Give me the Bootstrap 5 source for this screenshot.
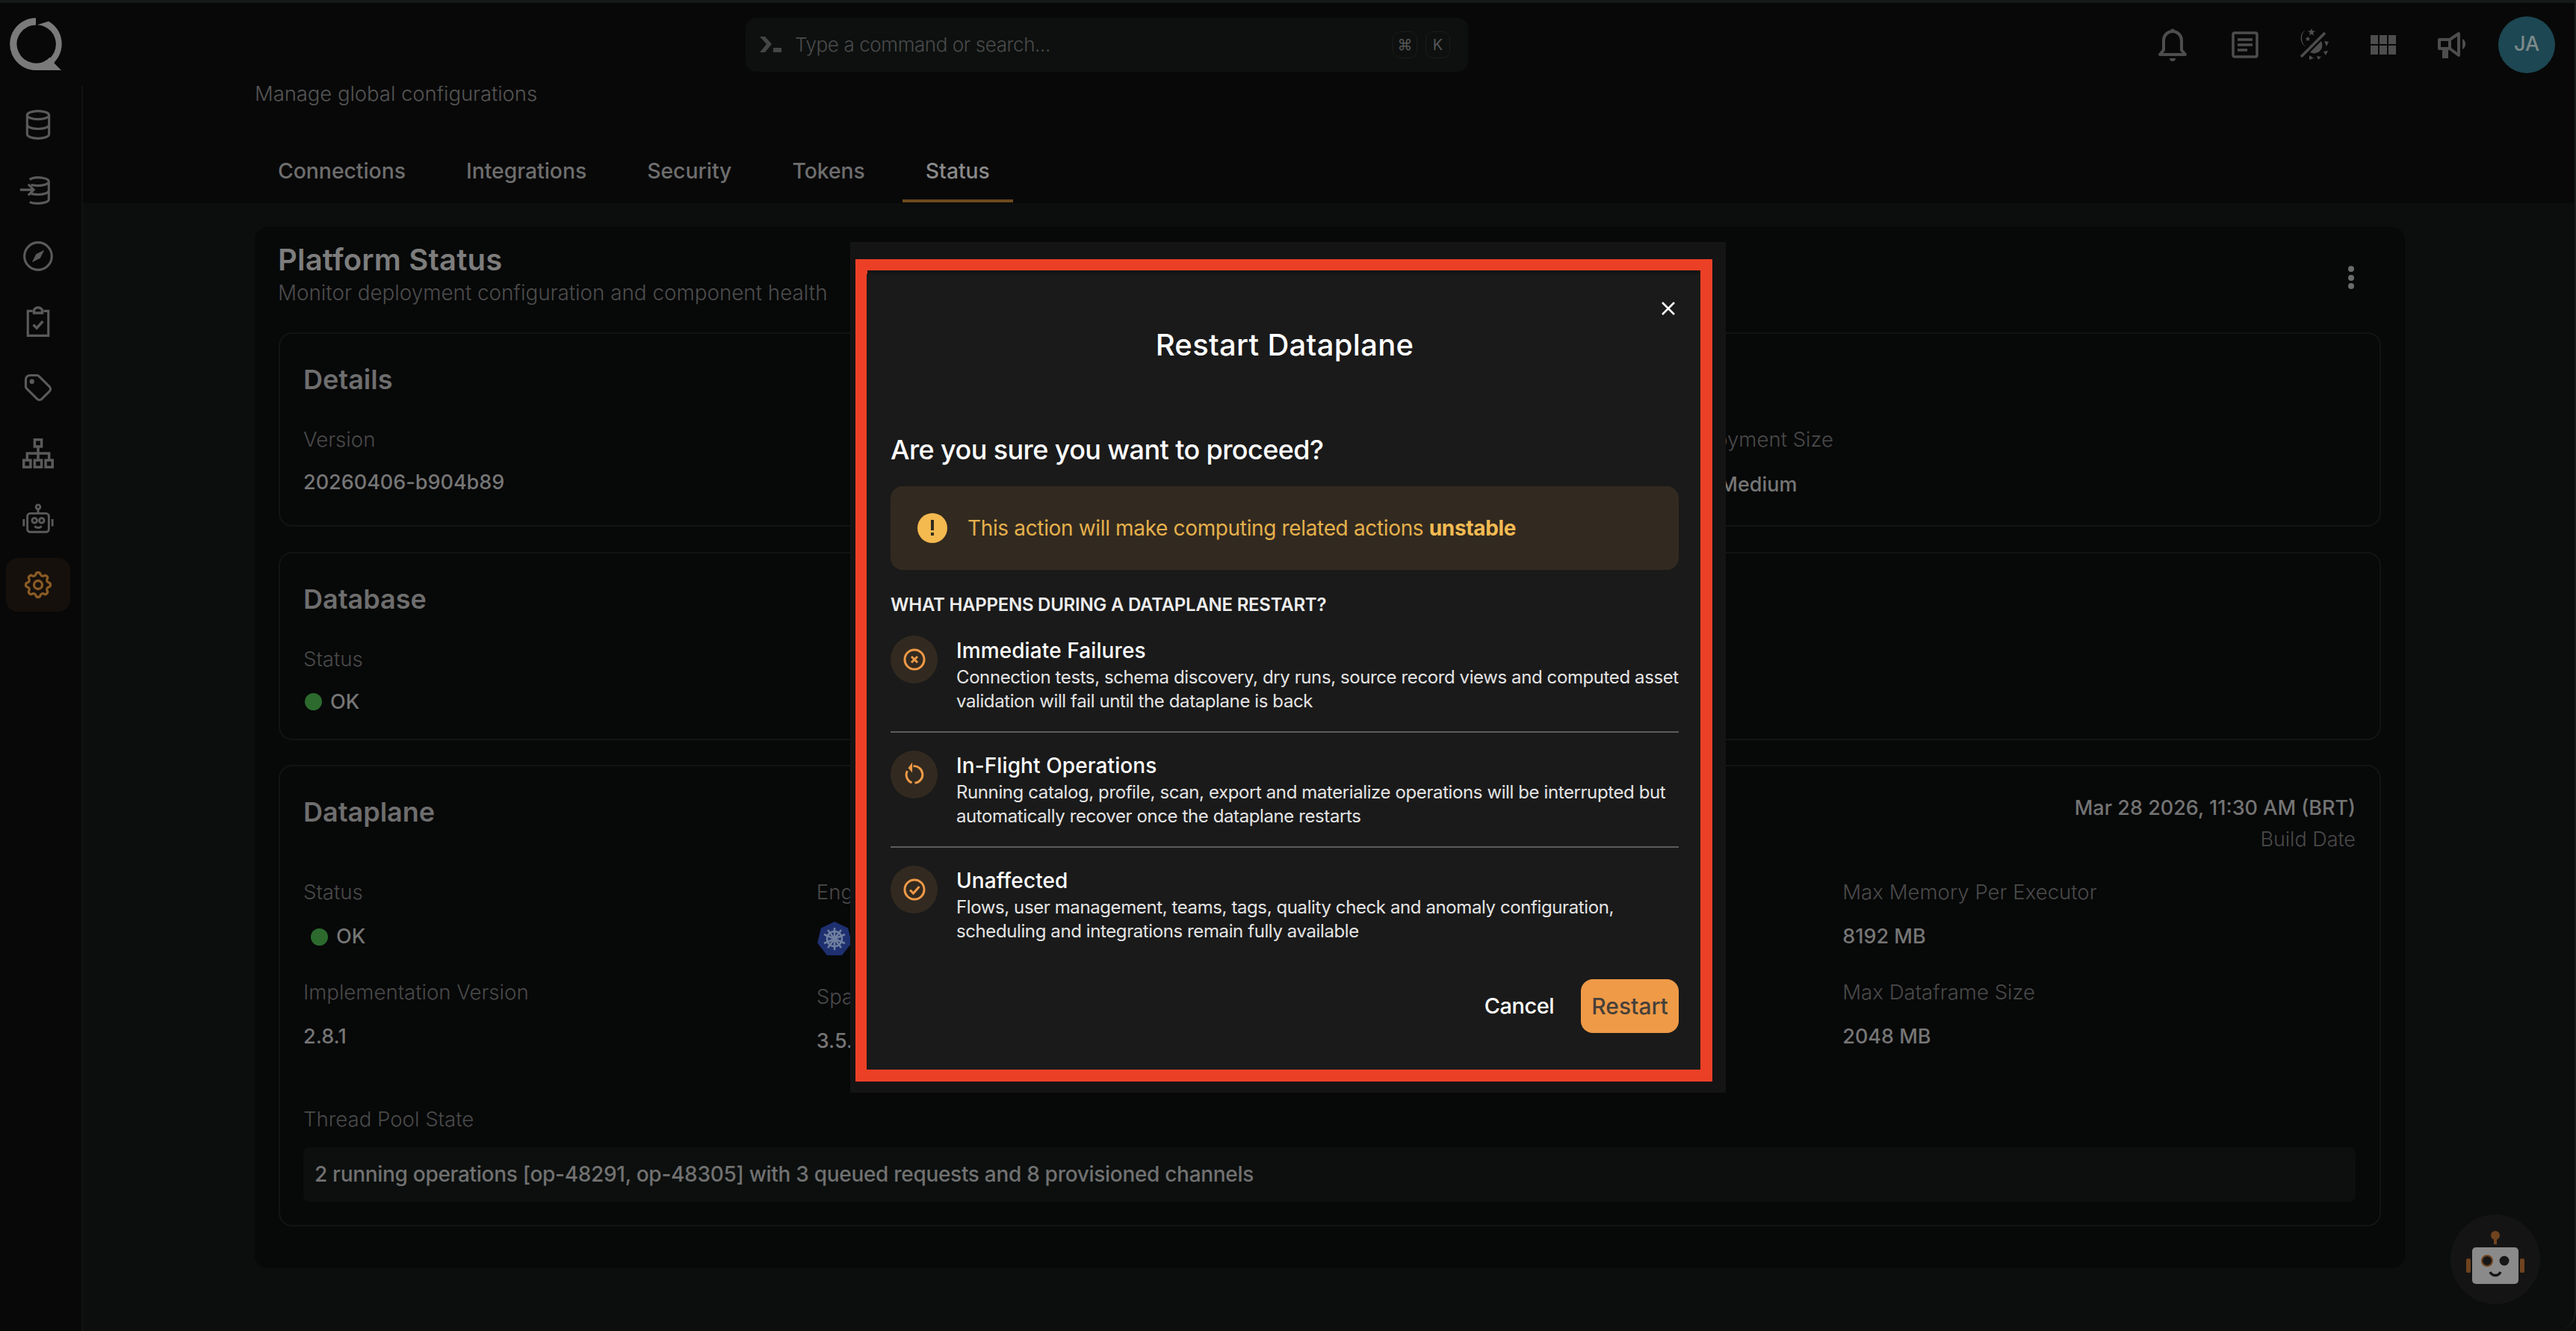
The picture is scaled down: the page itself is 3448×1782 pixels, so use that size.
<!DOCTYPE html>
<html lang="en">
<head>
  <meta charset="UTF-8">
  <meta name="viewport" content="width=device-width, initial-scale=1.0">
  <title>Platform Status</title>
  <link href="https://cdn.jsdelivr.net/npm/bootstrap@5.3.1/dist/css/bootstrap.min.css" rel="stylesheet">
  <style>
    html, body { height: 100%; }
    body { background: #0b0e0d; font-family: "Inter", "Liberation Sans", sans-serif; font-size: 28px; color: #767676; overflow: hidden; position: relative; }
    svg { display: block; }
    .app-frame { height: 100%; border-right: 2px solid #1a1d1d; border-bottom-right-radius: 26px; overflow: hidden; }

    /* top bar */
    .top-strip { height: 4px; background: #151918; flex: none; }
    .top-bar { height: 111px; background: #080808; flex: none; padding-left: 13px; padding-right: 26px; }
    .logo-q { width: 72px; height: 72px; }
    .cmd-box { margin-left: 913px; width: 967px; height: 72px; background: #0d100f; border-radius: 14px; padding: 0 24px 0 19px; }
    .cmd-text { color: #4a4a4a; font-weight: 300; margin-left: 17px; font-size: 26px; letter-spacing: -.4px; }
    .key-caps { gap: 11px; }
    .key-cap { width: 33px; height: 36px; border: 1px solid #1a1c1c; border-radius: 10px; color: #565656; font-size: 20px; display: flex; align-items: center; justify-content: center; }
    .top-icons { margin-left: auto; color: #4d4d4d; }
    .ico-bell { margin-right: 59px; }
    .ico-doc { margin-right: 45px; }
    .ico-theme { margin-right: 45px; }
    .ico-apps { margin-right: 56px; }
    .ico-horn { margin-right: 41px; }
    .avatar-ja { width: 76px; height: 76px; border-radius: 50%; background: #1c4753; color: #7d8a8a; font-size: 27px; font-weight: 500; display: flex; align-items: center; justify-content: center; }

    /* sidebar */
    .side-rail { width: 111px; flex: none; background: #080808; border-right: 2px solid #101212; padding-top: 16px; gap: 16px; }
    .rail-item { width: 86px; height: 72px; margin-left: 8px; border-radius: 16px; color: #5a5a5a; display: flex; align-items: center; justify-content: center; }
    .rail-item.is-active { background: #15100c; color: #8a5a24; }
    .ico-ingest { margin-left: -8px; }

    /* page head */
    .page-area { min-width: 0; overflow: hidden; }
    .page-head { height: 157px; background: #080808; padding-left: 230px; display: flow-root; }
    .page-sub { color: #555; font-weight: 300; font-size: 27.400px; line-height: 40px; margin-top: -10px; }
    .tab-row { margin-top: 50px; gap: 19px; }
    .tab-row .nav-link { color: #6e6e6e; font-size: 28.300px; font-weight: 500; padding: 0 31px; height: 76px; line-height: 68px; border-bottom: 4px solid transparent; }
    .tab-row .nav-link.active { color: #8a8a8a; border-bottom-color: #6e4a1c; }

    /* cards */
    .status-wrap { margin: 32px 0 0 230px; width: 2878px; background: #070808; border: 0; border-radius: 18px; padding: 20px 32px 56px; color: inherit; }
    .status-head { margin-left: -1px; }
    .status-title { font-size: 40px; line-height: 48px; font-weight: 600; letter-spacing: .2px; color: #7d7d7d; margin: 0; }
    .status-sub { font-size: 27.800px; line-height: 40px; font-weight: 300; color: #4d4d4d; margin-bottom: 33px; }
    .kebab { margin-top: 32px; margin-right: 36px; gap: 3.500px; }
    .kebab i { display: block; width: 8px; height: 8px; border-radius: 50%; background: #6b6b6b; }
    .info-card { background: transparent; border: 2px solid #121414; border-radius: 18px; padding: 31px 32px 29px 31px; color: inherit; margin-bottom: 33.500px; }
    .info-card.tall-foot { padding-bottom: 34px; }
    .info-card.dp-card { padding-bottom: 31px; }
    .info-title { font-size: 36px; line-height: 60px; font-weight: 600; color: #6e6e6e; margin: 0; }
    .field-label { font-size: 27.600px; line-height: 40px; font-weight: 300; color: #4a4a4a; }
    .field-value { font-size: 27px; line-height: 40px; font-weight: 500; color: #767676; margin-top: 18px; }
    .dp-card .field-value { margin-top: 20px; }
    .size-value { padding-left: 64px; margin-top: 21px; }
    .first-row { margin-top: 30px; }
    .second-field { margin-top: 34px; }
    .ok-dot { width: 23px; height: 23px; border-radius: 50%; background: #2c6a2e; flex: none; margin-right: 3px; }
    .ok-db { padding-left: 2px; }
    .ok-dp { padding-left: 10px; }
    .kube-ico { margin-top: 20px; }
    .build-date { font-size: 27px; line-height: 40px; font-weight: 500; color: #747474; margin-top: 5px; text-align: right; }
    .build-label { font-size: 27px; line-height: 40px; font-weight: 300; color: #4a4a4a; text-align: right; margin-top: 2px; }
    .thread-label { margin-top: 64px; }
    .thread-box { background: #0c0f0e; border-radius: 8px; height: 73px; line-height: 73px; padding-left: 15px; margin-top: 18px; font-weight: 500; letter-spacing: -.3px; color: #717171; }

    /* dialog */
    .dialog-back { position: absolute; left: 1138px; top: 324px; width: 1172px; height: 1139px; background: #141414; }
    .dialog-red { position: absolute; left: 7px; top: 23px; width: 1147px; height: 1101px; border: 16px solid #ec4026; border-top-width: 15px; }
    .dialog-card { position: absolute; left: 22px; top: 43px; width: 1116px; height: 1065px; background: #1a1a1a; border: 0; border-radius: 0; color: #fff; padding: 0 29px 0 32px; }
    .close-x { position: absolute; right: 33px; top: 36px; color: #fff; }
    .dialog-title { font-size: 40px; line-height: 50px; font-weight: 500; letter-spacing: .3px; text-align: center; margin: 70px 0 0; }
    .dialog-ask { font-size: 36px; line-height: 50px; font-weight: 500; letter-spacing: -.6px; margin-top: 90px; }
    .warn-box { background: #322a20; color: #e5b04c; border: 0; border-radius: 16px; height: 112px; margin: 24px 0 0; padding: 0 0 0 36px; font-size: 28px; letter-spacing: -.35px; font-weight: 400; gap: 27px; flex: none; }
    .warn-box b { color: #f3bb52; font-weight: 700; }
    .warn-ico { flex: none; }
    .happen-head { font-size: 24px; line-height: 36px; font-weight: 600; letter-spacing: -.25px; color: #eee; margin-top: 29px; text-transform: uppercase; }
    .effect-list { margin-top: 23px; }
    .effect-row { gap: 25px; padding-bottom: 24px; }
    .effect-row + .effect-row { border-top: 2px solid #5c5c5c; padding-top: 24px; }
    .effect-ico { width: 63px; height: 64px; border-radius: 50%; background: #322a20; color: #ef9a47; flex: none; display: flex; align-items: center; justify-content: center; }
    .effect-name { font-size: 28px; line-height: 40px; font-weight: 500; letter-spacing: .1px; }
    .effect-text { font-size: 24px; line-height: 32px; font-weight: 400; letter-spacing: -.4px; color: #e4e4e4; white-space: nowrap; }
    .dialog-foot { margin-top: 24px; gap: 36px; }
    .btn-cancel { color: #fff; font-size: 29px; font-weight: 500; letter-spacing: -.5px; padding: 0; border: 0; background: none; }
    .btn-restart { width: 131px; height: 72px; background: #ef9a47; color: #46403a; border: 0; border-radius: 16px; font-size: 30px; font-weight: 500; padding: 0; }
    .btn-restart:hover { background: #ef9a47; color: #46403a; }

    /* assistant */
    .bot-fab { position: absolute; left: 3280px; top: 1626px; width: 120px; height: 120px; border-radius: 50%; background: #141414; }
  </style>
</head>
<body>

<div class="app-frame d-flex flex-column">
  <div class="top-strip"></div>
  <div class="top-bar d-flex align-items-center">
    <svg class="logo-q" viewBox="13 23 72 72">
      <path d="M48 27.700A30.300 30.300 0 1 0 70 79" fill="none" stroke="#7a7a7a" stroke-width="9.400"/>
      <path d="M50 32.300L65 27.400A35 35 0 0 1 72 83L82 93H48V84A25.700 25.700 0 0 0 50 32.300z" fill="#7a7a7a"/>
    </svg>
    <div class="cmd-box d-flex align-items-center">
      <svg width="30" height="22" viewBox="0 0 30 22" fill="#454545"><path d="M0 0h7l9 10-9 11H0l9-11z"/><rect x="18" y="15" width="11" height="6"/></svg>
      <span class="cmd-text">Type a command or search...</span>
      <div class="key-caps d-flex ms-auto">
        <span class="key-cap">⌘</span>
        <span class="key-cap">K</span>
      </div>
    </div>
    <div class="top-icons d-flex align-items-center">
      <svg class="ico-bell" width="40" height="46" viewBox="0 0 40 46" fill="none" stroke="currentColor" stroke-width="4"><path d="M3 36h34l-5-6V17a12 12 0 0 0-24 0v13z" stroke-linejoin="round"/><circle cx="20" cy="4" r="2.500" fill="currentColor" stroke="none"/><path d="M16 41h8a4 4 0 0 1-8 0z" fill="currentColor" stroke="none"/></svg>
      <svg class="ico-doc" width="36" height="36" viewBox="0 0 36 36" fill="none" stroke="currentColor" stroke-width="3.500"><rect x="2" y="2" width="32" height="32" rx="2"/><path d="M8 11h20M8 18h20M8 25h13"/></svg>
      <svg class="ico-theme" width="60" height="60" viewBox="0 0 60 60" fill="currentColor">
        <path d="M18 10A13 13 0 0 0 19 33A15 15 0 0 1 13 21A14 14 0 0 1 18 10z"/>
        <path d="M26 8l1.300 3.300 3.700.2-2.900 2.300.9 3.700-3-2-3 2 .9-3.700-2.900-2.300 3.700-.2zM21 18.500l1 2.300 2.500.2-1.800 1.600.5 2.400-2.200-1.300-2.200 1.300.5-2.400-1.800-1.600 2.500-.2z"/>
        <path d="M12 46L44 14" stroke="currentColor" stroke-width="3.500"/>
        <path d="M39 25L24 40A11 11 0 0 0 39 25z"/>
        <path d="M43 25l6 1-3 6zM48 38l-3 6-3-5zM33 45l6 1-4 4zM23 44l6 4-6 2z"/>
      </svg>
      <svg class="ico-apps" width="34" height="26" viewBox="0 0 34 26" fill="currentColor"><rect width="10" height="12"/><rect x="12" width="10" height="12"/><rect x="24" width="10" height="12"/><rect y="14" width="10" height="12"/><rect x="12" y="14" width="10" height="12"/><rect x="24" y="14" width="10" height="12"/></svg>
      <svg class="ico-horn" width="40" height="36" viewBox="0 0 40 36" fill="none" stroke="currentColor" stroke-width="4"><path d="M2 11h14v12H2z" stroke-linejoin="round"/><path d="M16 11l12-8v29l-12-9" stroke-linejoin="round"/><path d="M8 24v10h4V24" fill="currentColor"/><path d="M33 10a8 8 0 0 1 0 14z" fill="currentColor" stroke="none"/></svg>
      <div class="avatar-ja">JA</div>
    </div>
  </div>

  <div class="d-flex flex-grow-1 overflow-hidden">
    <div class="side-rail d-flex flex-column">
      <div class="rail-item"><svg width="44" height="44" viewBox="0 0 24 24" fill="none" stroke="currentColor" stroke-width="1.700"><ellipse cx="12" cy="5" rx="8" ry="3"/><path d="M4 5v14c0 1.700 3.600 3 8 3s8-1.300 8-3V5M4 12c0 1.700 3.600 3 8 3s8-1.300 8-3"/></svg></div>
      <div class="rail-item"><svg class="ico-ingest" width="44" height="44" viewBox="0 0 24 24" fill="none" stroke="currentColor" stroke-width="1.700"><path d="M8 4c1.500-1 3-1.500 6-1.500 4.400 0 8 1.200 8 3v13c0 1.700-3.600 3-8 3-2.500 0-4.500-.4-6-1M22 12c0 1.700-3.600 3-8 3-2 0-3-.2-5-.6M22 5.500c0 1.700-3.600 3-8 3-2 0-3-.2-5-.6"/><path d="M1 11.500h10M7 7.500l4 4-4 4"/></svg></div>
      <div class="rail-item"><svg width="44" height="44" viewBox="0 0 24 24" fill="none" stroke="currentColor" stroke-width="1.700"><circle cx="12" cy="12" r="10"/><path d="M16.500 7.500l-6 3-3 6 6-3z" fill="currentColor" stroke="none"/></svg></div>
      <div class="rail-item"><svg width="44" height="44" viewBox="0 0 24 24" fill="none" stroke="currentColor" stroke-width="1.700"><path d="M8 4H4.500v18h15V4H16"/><path d="M9 5.500V4a3 2.500 0 0 1 6 0v1.500zM8.500 14l2.500 2.500 4.500-5" stroke-width="1.900"/></svg></div>
      <div class="rail-item"><svg width="44" height="44" viewBox="0 0 24 24" fill="none" stroke="currentColor" stroke-width="1.700"><circle cx="7.500" cy="7.500" r=".9" fill="currentColor"/><path d="M3 6v5.172a2 2 0 0 0 .586 1.414l7.710 7.710a2.410 2.410 0 0 0 3.408 0l5.592-5.592a2.410 2.410 0 0 0 0-3.408l-7.710-7.710a2 2 0 0 0-1.414-.586h-5.172a3 3 0 0 0-3 3z"/></svg></div>
      <div class="rail-item"><svg width="44" height="44" viewBox="0 0 24 24" fill="none" stroke="currentColor" stroke-width="1.900"><rect x="9.500" y="2" width="5" height="5"/><rect x="1.500" y="17" width="5" height="5"/><rect x="9.500" y="17" width="5" height="5"/><rect x="17.500" y="17" width="5" height="5"/><path d="M12 7v10M4 17v-5h16v5"/></svg></div>
      <div class="rail-item"><svg width="46" height="46" viewBox="0 0 24 24" fill="none" stroke="currentColor" stroke-width="1.500"><rect x="4.500" y="8" width="15" height="13" rx="2"/><circle cx="12" cy="3.500" r="1.500"/><path d="M12 5v3M2 12v5M22 12v5"/><circle cx="9.500" cy="13" r="1.700"/><circle cx="14.500" cy="13" r="1.700"/><path d="M9.500 17c1.500 1.200 3.500 1.200 5 0"/></svg></div>
      <div class="rail-item is-active"><svg width="44" height="44" viewBox="0 0 24 24" fill="none" stroke="currentColor" stroke-width="1.800"><path d="M10.325 4.317c.426-1.756 2.924-1.756 3.350 0a1.724 1.724 0 0 0 2.573 1.066c1.543-.94 3.310.826 2.370 2.370a1.724 1.724 0 0 0 1.065 2.572c1.756.426 1.756 2.924 0 3.350a1.724 1.724 0 0 0-1.066 2.573c.94 1.543-.826 3.310-2.370 2.370a1.724 1.724 0 0 0-2.572 1.065c-.426 1.756-2.924 1.756-3.350 0a1.724 1.724 0 0 0-2.573-1.066c-1.543.94-3.310-.826-2.370-2.370a1.724 1.724 0 0 0-1.065-2.572c-1.756-.426-1.756-2.924 0-3.350a1.724 1.724 0 0 0 1.066-2.573c-.94-1.543.826-3.310 2.370-2.370 1 .608 2.296.07 2.572-1.065z"/><circle cx="12" cy="12" r="3"/></svg></div>
    </div>

    <div class="page-area flex-grow-1">
      <div class="page-head">
        <div class="page-sub">Manage global configurations</div>
        <ul class="nav tab-row">
          <li class="nav-item"><a class="nav-link" href="#">Connections</a></li>
          <li class="nav-item"><a class="nav-link" href="#">Integrations</a></li>
          <li class="nav-item"><a class="nav-link" href="#">Security</a></li>
          <li class="nav-item"><a class="nav-link" href="#">Tokens</a></li>
          <li class="nav-item"><a class="nav-link active" href="#">Status</a></li>
        </ul>
      </div>

      <div class="card status-wrap">
        <div class="d-flex justify-content-between">
          <div class="status-head">
            <h2 class="status-title">Platform Status</h2>
            <div class="status-sub">Monitor deployment configuration and component health</div>
          </div>
          <div class="kebab d-flex flex-column"><i></i><i></i><i></i></div>
        </div>

        <div class="card info-card tall-foot">
          <h3 class="info-title">Details</h3>
          <div class="row g-0 first-row">
            <div class="col-4">
              <div class="field-label">Version</div>
              <div class="field-value">20260406-b904b89</div>
            </div>
            <div class="col-4"></div>
            <div class="col-4">
              <div class="field-label">Deployment Size</div>
              <div class="field-value size-value">Medium</div>
            </div>
          </div>
        </div>

        <div class="card info-card">
          <h3 class="info-title">Database</h3>
          <div class="first-row">
            <div class="field-label">Status</div>
            <div class="field-value d-flex align-items-center gap-2 ok-db"><span class="ok-dot"></span>OK</div>
          </div>
        </div>

        <div class="card info-card dp-card mb-0">
          <div class="d-flex justify-content-between">
            <h3 class="info-title">Dataplane</h3>
            <div>
              <div class="build-date">Mar 28 2026, 11:30 AM (BRT)</div>
              <div class="build-label">Build Date</div>
            </div>
          </div>
          <div class="row g-0 first-row">
            <div class="col-3">
              <div class="field-label">Status</div>
              <div class="field-value d-flex align-items-center gap-2 ok-dp"><span class="ok-dot"></span>OK</div>
              <div class="field-label second-field">Implementation Version</div>
              <div class="field-value">2.8.1</div>
            </div>
            <div class="col-3">
              <div class="field-label">Engine</div>
              <svg class="kube-ico" width="48" height="46" viewBox="0 0 48 46"><path d="M24 0l18 8.500 5 20-13 16.500H14L1 28.500l5-20z" fill="#1e3070"/><g fill="none" stroke="#6f7f9f" stroke-width="2.500"><circle cx="24" cy="23" r="10"/><path d="M24 8v30M10 17l28 12M38 17L10 29M15 35l18-24M33 35L15 11"/></g></svg>
              <div class="field-label second-field">Spark Version</div>
              <div class="field-value">3.5.1</div>
            </div>
            <div class="col-3"></div>
            <div class="col-3">
              <div class="field-label">Max Memory Per Executor</div>
              <div class="field-value">8192 MB</div>
              <div class="field-label second-field">Max Dataframe Size</div>
              <div class="field-value">2048 MB</div>
            </div>
          </div>
          <div class="field-label thread-label">Thread Pool State</div>
          <div class="thread-box">2 running operations [op-48291, op-48305] with 3 queued requests and 8 provisioned channels</div>
        </div>
      </div>
    </div>
  </div>
</div>

<div class="bot-fab">
  <svg width="120" height="120" viewBox="0 0 120 120">
    <circle cx="60" cy="28" r="6" fill="#70431f"/><rect x="58" y="30" width="4" height="10" fill="#70431f"/>
    <rect x="29" y="44" width="62" height="49" rx="5" fill="#8a8a8a"/>
    <rect x="21" y="59" width="6" height="19" rx="2" fill="#70431f"/><rect x="93" y="59" width="6" height="19" rx="2" fill="#70431f"/>
    <circle cx="49" cy="62" r="7" fill="#161616" stroke="#70431f" stroke-width="2"/><circle cx="72" cy="62" r="6.500" fill="#161616"/>
    <path d="M53 77c3 6 11 6 14 0" fill="none" stroke="#161616" stroke-width="3.500"/>
  </svg>
</div>

<div class="dialog-back">
  <div class="dialog-red"></div>
  <div class="card dialog-card">
    <svg class="close-x" width="20" height="20" viewBox="0 0 20 20" stroke="currentColor" stroke-width="2.500"><path d="M2 2l16 16M18 2L2 18"/></svg>
    <h2 class="dialog-title">Restart Dataplane</h2>
    <div class="dialog-ask">Are you sure you want to proceed?</div>
    <div class="alert warn-box d-flex align-items-center">
      <svg class="warn-ico" width="40" height="40" viewBox="0 0 40 40"><circle cx="20" cy="20" r="20" fill="#f4b94f"/><rect x="18" y="9" width="4" height="14" fill="#322a20"/><rect x="18" y="26" width="4" height="4" fill="#322a20"/></svg>
      <span>This action will make computing related actions <b>unstable</b></span>
    </div>
    <div class="happen-head">What happens during a dataplane restart?</div>
    <div class="effect-list">
      <div class="effect-row d-flex">
        <div class="effect-ico"><svg width="32" height="32" viewBox="0 0 32 32" fill="none" stroke="currentColor" stroke-width="3"><circle cx="16" cy="16" r="13"/><path d="M12 12l8 8M20 12l-8 8"/></svg></div>
        <div><div class="effect-name">Immediate Failures</div><div class="effect-text">Connection tests, schema discovery, dry runs, source record views and computed asset<br>validation will fail until the dataplane is back</div></div>
      </div>
      <div class="effect-row d-flex">
        <div class="effect-ico"><svg width="63" height="64" viewBox="0 0 64 64" fill="none" stroke="currentColor" stroke-width="3"><path d="M31 20.500A11.500 11.500 0 1 1 33 43.500M29 43.100A11.500 11.500 0 0 1 22.800 27"/><path d="M24 23l5.500-7.500v14z" fill="currentColor" stroke="none"/></svg></div>
        <div><div class="effect-name">In-Flight Operations</div><div class="effect-text">Running catalog, profile, scan, export and materialize operations will be interrupted but<br>automatically recover once the dataplane restarts</div></div>
      </div>
      <div class="effect-row d-flex">
        <div class="effect-ico"><svg width="32" height="32" viewBox="0 0 32 32" fill="none" stroke="currentColor" stroke-width="3"><circle cx="16" cy="16" r="13"/><path d="M10 16.500l4.500 4.500 8-9"/></svg></div>
        <div><div class="effect-name">Unaffected</div><div class="effect-text">Flows, user management, teams, tags, quality check and anomaly configuration,<br>scheduling and integrations remain fully available</div></div>
      </div>
    </div>
    <div class="dialog-foot d-flex justify-content-end align-items-center">
      <button class="btn btn-cancel">Cancel</button>
      <button class="btn btn-restart">Restart</button>
    </div>
  </div>
</div>

<script src="https://cdn.jsdelivr.net/npm/bootstrap@5.3.1/dist/js/bootstrap.bundle.min.js"></script>
</body>
</html>
